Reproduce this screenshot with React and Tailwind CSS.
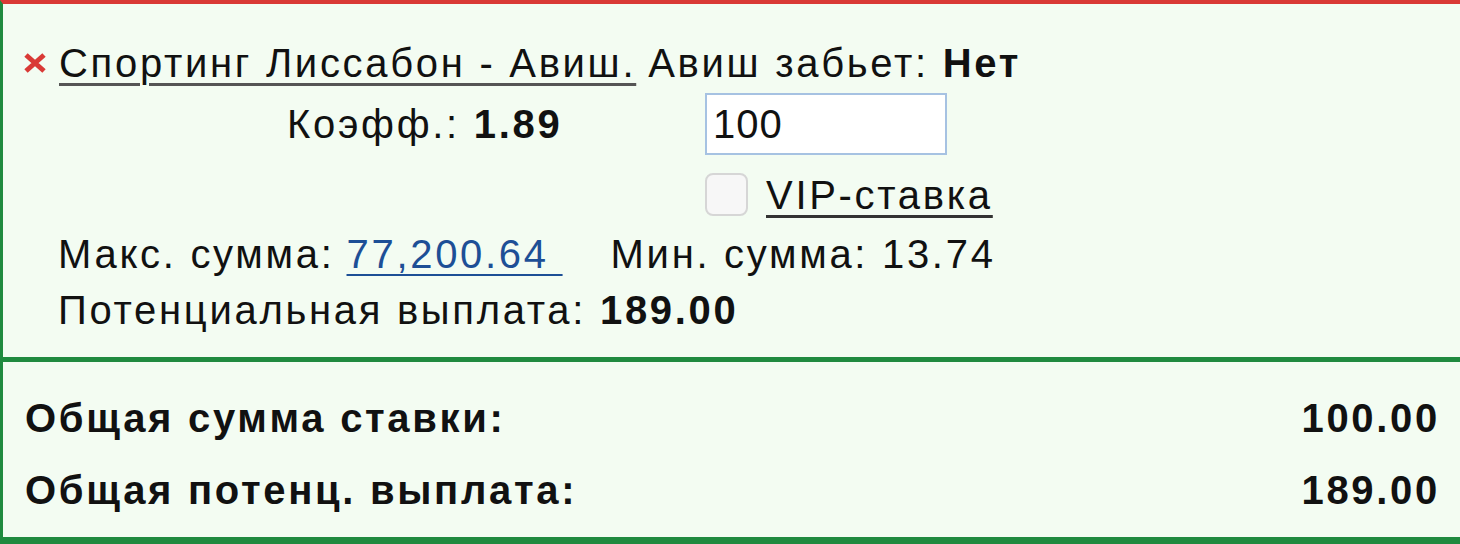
export default function App() {
  return (
    <div className="w-[1460px] h-[544px] overflow-hidden bg-[#f3fcf2] border-t-4 border-t-[#d93a36] border-l-[3px] border-l-[#1f8a3f] text-[40px] tracking-[2.7px] leading-none text-[#111]" style={{ fontFamily: '"Liberation Sans", Arial, sans-serif' }}>
      <div className="h-[353px] flex flex-col">
        <div className="h-[58px] mt-[30px] flex items-center">
          <svg className="ml-[20px] w-[24px] h-[20px]" viewBox="0 0 24 20">
            <path d="M3 2 L21 18 M21 2 L3 18" stroke="#d93a36" strokeWidth="5" strokeLinecap="butt" fill="none" />
          </svg>
          <span className="ml-[12px] underline decoration-[3px] underline-offset-[6px] decoration-[#555]">Спортинг Лиссабон - Авиш.</span>
          <span className="ml-[12px]">Авиш забьет: <b>Нет</b></span>
        </div>
        <div className="flex items-center h-[64px]">
          <span className="ml-[284px] w-[418px]">Коэфф.: <b>1.89</b></span>
          <div className="w-[242px] h-[62px] bg-white border-2 border-[#a6c2e2] flex items-center px-[6px] tracking-[1px]">100</div>
        </div>
        <div className="flex items-center h-[70px] pt-[7px]">
          <div className="ml-[702px] w-[43px] h-[43px] rounded-[8px] border-2 border-[#d6d6d6] bg-[#f7f7f7]"></div>
          <span className="ml-[18px] underline decoration-[3px] underline-offset-[6px] decoration-[#333]">VIP-ставка</span>
        </div>
        <div className="flex items-center h-[56px] ml-[55px]">
          <span>Макс. сумма: </span>
          <span className="ml-[12px] text-[#1d4f96] underline decoration-2 underline-offset-[6px]">77,200.64&nbsp;</span>
          <span className="ml-[48px]">Мин. сумма: 13.74</span>
        </div>
        <div className="flex items-center h-[56px] ml-[55px]">
          <span>Потенциальная выплата: <b>189.00</b></span>
        </div>
      </div>
      <div className="border-t-[5px] border-t-[#1f8a3f] border-b-[7px] border-b-[#1f8a3f] h-[187px] flex flex-col pt-[20px] font-bold">
        <div className="flex justify-between items-center h-[72px] pl-[22px] pr-[20px]">
          <span>Общая сумма ставки:</span>
          <span>100.00</span>
        </div>
        <div className="flex justify-between items-center h-[72px] pl-[22px] pr-[20px]">
          <span>Общая потенц. выплата:</span>
          <span>189.00</span>
        </div>
      </div>
    </div>
  );
}
